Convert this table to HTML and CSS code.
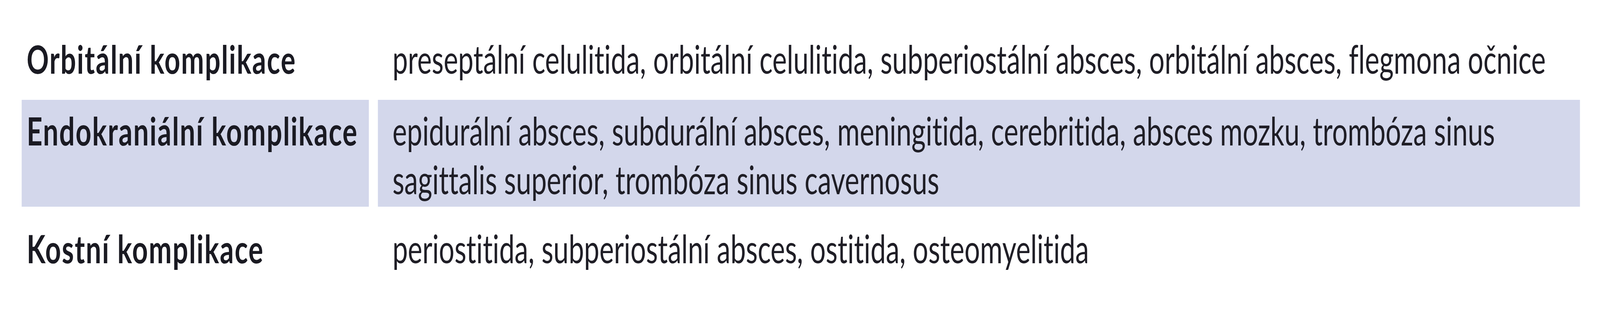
FILE: index.html
```html
<!DOCTYPE html>
<html lang="cs">
<head>
<meta charset="utf-8">
<title>Komplikace</title>
<link rel="stylesheet" href="styles.css">
</head>
<body>
<div class="page">
  <div class="table">
    <div class="cell label row-first">Orbitální komplikace</div>
    <div class="cell content row-first">preseptální celulitida, orbitální celulitida, subperiostální absces, orbitální absces, flegmona očnice</div>

    <div class="cell label shaded">Endokraniální komplikace</div>
    <div class="cell content shaded">epidurální absces, subdurální absces, meningitida, cerebritida, absces mozku, trombóza sinus sagittalis superior, trombóza sinus cavernosus</div>

    <div class="cell label row-last">Kostní komplikace</div>
    <div class="cell content row-last">periostitida, subperiostální absces, ostitida, osteomyelitida</div>
  </div>
</div>
</body>
</html>
```
FILE: styles.css
```css
html, body {
  margin: 0;
  background: #ffffff;
}

.page {
  overflow: hidden;
}

/* The browser window is capped at 4096px wide; the table is laid out at the
   reference's 5830px geometry and squeezed horizontally to fit the window. */
.table {
  display: grid;
  grid-template-columns: 1265px 4380px;
  column-gap: 33px;
  row-gap: 33px;
  width: max-content;
  padding: 72px 73px 0 79px;
  transform: scaleX(0.70257);
  transform-origin: 0 0;
  font-family: "Lato", "Open Sans", sans-serif;
  font-size: 100px;
  line-height: 125px;
  font-variant-ligatures: none;
  color: #1f1e26;
}

.cell {
  padding: 16px 53px 8px 53px;
}

.label {
  padding-left: 18px;
  padding-right: 10px;
  font-weight: 700;
  letter-spacing: 3px;
  color: #1a1a22;
}

.content {
  font-weight: 400;
}

.row-first {
  padding-top: 16px;
  padding-bottom: 10px;
}

.row-last {
  padding-top: 11px;
}

.shaded {
  background: #d3d7eb;
}
```
